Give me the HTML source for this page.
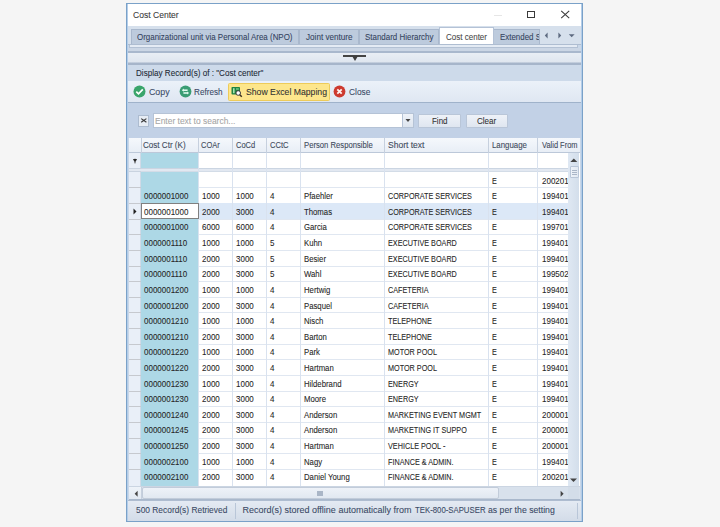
<!DOCTYPE html>
<html><head><meta charset="utf-8">
<style>
*{margin:0;padding:0;box-sizing:border-box}
html,body{width:720px;height:527px;overflow:hidden;background:#f5f5f5;font-family:"Liberation Sans",sans-serif;position:relative}
.a{position:absolute}
.t{position:absolute;white-space:pre;font-size:8px;line-height:10px;color:#333}
.g{position:absolute;white-space:pre;font-size:8px;line-height:10px;color:#2e2e2e}
.x{position:absolute;white-space:pre;line-height:1;-webkit-text-stroke:0.08px currentColor}
</style></head><body>

<div class="a" style="left:126px;top:3px;width:457px;height:519px;background:#7aa1c8"></div>
<div class="a" style="left:127px;top:4px;width:455px;height:517px;background:#b3cde9"></div>
<div class="a" style="left:128px;top:4px;width:453px;height:516px;background:#c9d7e8"></div>
<div class="a" style="left:128px;top:4px;width:453px;height:22px;background:#fff"></div>
<div class="x" style="left:133.30px;top:10.97px;font-size:9px;color:#3a3a3a;transform:scaleX(0.9515);transform-origin:0 0;">Cost Center</div>
<div class="a" style="left:494px;top:14.5px;width:8px;height:1px;background:#e6e6e6"></div>
<div class="a" style="left:527px;top:10.8px;width:8px;height:7.5px;border:1.2px solid #3a3a3a"></div>
<svg class="a" style="left:559px;top:9px" width="12" height="12" viewBox="0 0 12 12"><path d="M2.2 1.9L10.2 9.1M10.2 1.9L2.2 9.1" stroke="#3a3a3a" stroke-width="1.1"/></svg>
<div class="a" style="left:128px;top:26px;width:453px;height:19px;background:#d6e0ec"></div>
<div class="a" style="left:131px;top:29px;width:168px;height:16px;background:#bdcbdd;border:1px solid #a9b8cd;border-bottom:0"></div>
<div class="x" style="left:137.00px;top:33.27px;font-size:9px;color:#34435e;transform:scaleX(0.8831);transform-origin:0 0;">Organizational unit via Personal Area (NPO)</div>
<div class="a" style="left:299px;top:29px;width:60px;height:16px;background:#bdcbdd;border:1px solid #a9b8cd;border-bottom:0"></div>
<div class="x" style="left:305.60px;top:33.27px;font-size:9px;color:#34435e;transform:scaleX(0.9043);transform-origin:0 0;">Joint venture</div>
<div class="a" style="left:359px;top:29px;width:80px;height:16px;background:#bdcbdd;border:1px solid #a9b8cd;border-bottom:0"></div>
<div class="x" style="left:364.60px;top:33.27px;font-size:9px;color:#34435e;transform:scaleX(0.8833);transform-origin:0 0;">Standard Hierarchy</div>
<div class="a" style="left:439px;top:27px;width:55px;height:18px;background:#fff;border:1px solid #b4c2d6;border-bottom:0"></div>
<div class="x" style="left:445.70px;top:32.67px;font-size:9px;color:#4a4a4a;transform:scaleX(0.8907);transform-origin:0 0;">Cost center</div>
<div class="a" style="left:494px;top:29px;width:46px;height:16px;background:#bdcbdd;border:1px solid #a9b8cd;border-bottom:0;border-left:0;overflow:hidden"><div class="x" style="left:5.75px;top:3.3px;font-size:9px;color:#34435e;transform:scaleX(0.88);transform-origin:0 0">Extended Structure</div></div>
<svg class="a" style="left:540px;top:29px" width="41" height="14" viewBox="0 0 41 14"><path d="M7.6 3.6L4.8 6.5L7.6 9.4Z" fill="#5d6a80"/><path d="M18.4 3.6L21.2 6.5L18.4 9.4Z" fill="#5d6a80"/><path d="M28.8 5.3L34.6 5.3L31.7 8.2Z" fill="#5d6a80"/></svg>
<div class="a" style="left:128px;top:44px;width:453px;height:1px;background:#aebdd1"></div>
<div class="a" style="left:129px;top:45px;width:449px;height:3px;background:#e4ebf4;border:1px solid #b3c1d4;border-top:0"></div>
<div class="a" style="left:128px;top:48px;width:453px;height:3px;background:#cbd6e5"></div>
<div class="a" style="left:128px;top:51px;width:453px;height:14px;background:linear-gradient(#a9b8cd 0,#a9b8cd 1.5px,#e9eef5 2px,#dfe6ef 11px,#a6b5ca 12px,#a6b5ca 14px)"></div>
<div class="a" style="left:342.5px;top:55px;width:23.5px;height:2px;background:#444"></div>
<svg class="a" style="left:351px;top:56px" width="8" height="6" viewBox="0 0 8 6"><path d="M1 0L7 0L4 5Z" fill="#3e3e3e"/></svg>
<div class="a" style="left:128px;top:65px;width:453px;height:16px;background:#cddaea"></div>
<div class="x" style="left:135.60px;top:69.37px;font-size:9px;color:#222a36;transform:scaleX(0.9008);transform-origin:0 0;">Display Record(s) of : &quot;Cost center&quot;</div>
<div class="a" style="left:128px;top:81px;width:453px;height:21px;background:linear-gradient(#ebf1f9,#dfe7f2)"></div>
<div class="a" style="left:128px;top:101.5px;width:453px;height:1.5px;background:#9fb2ca"></div>
<svg class="a" style="left:133px;top:85px" width="13" height="13" viewBox="0 0 13 13"><circle cx="6.5" cy="6.5" r="6" fill="#3aa56b"/><path d="M3.3 6.6L5.5 8.8L9.8 4.3" stroke="#fff" stroke-width="1.7" fill="none"/></svg>
<div class="x" style="left:149.00px;top:87.57px;font-size:9px;color:#3b4a66;transform:scaleX(0.9802);transform-origin:0 0;">Copy</div>
<svg class="a" style="left:178.6px;top:85.1px" width="13" height="13" viewBox="0 0 13 13"><circle cx="6.5" cy="6.5" r="5.9" fill="#3a9d74"/><path d="M4.2 5.2L8.6 5.2" stroke="#e8fff4" stroke-width="1.5"/><path d="M2.8 5.2L4.8 3.6L4.8 6.8Z" fill="#e8fff4"/><path d="M4.4 8L8.6 8" stroke="#e8fff4" stroke-width="1.5"/><path d="M10.1 8L8.1 6.4L8.1 9.6Z" fill="#e8fff4"/></svg>
<div class="x" style="left:194.40px;top:87.57px;font-size:9px;color:#3b4a66;transform:scaleX(0.9043);transform-origin:0 0;">Refresh</div>
<div class="a" style="left:227.5px;top:82.5px;width:102px;height:18px;background:#fde68c;border:1px solid #edcb5a;border-radius:1.5px"></div>
<svg class="a" style="left:230px;top:85px" width="14" height="14" viewBox="0 0 14 14"><rect x="1.5" y="2" width="8.5" height="7.5" rx="0.8" fill="#1f8442"/><rect x="3" y="3.2" width="1.6" height="5" fill="#a6e3b0"/><rect x="6" y="3.2" width="2.8" height="1.6" fill="#6cc483"/><circle cx="8.2" cy="8" r="2.3" fill="#fff" stroke="#3a3a3a" stroke-width="1"/><path d="M9.8 9.7L11.8 11.8" stroke="#3a3020" stroke-width="1.5"/></svg>
<div class="x" style="left:245.80px;top:87.87px;font-size:9px;color:#333;transform:scaleX(0.9637);transform-origin:0 0;">Show Excel Mapping</div>
<svg class="a" style="left:333px;top:85px" width="13" height="13" viewBox="0 0 13 13"><circle cx="6.5" cy="6.5" r="5.9" fill="#cd3a2f"/><path d="M4.3 4.3L8.7 8.7M8.7 4.3L4.3 8.7" stroke="#fff2f0" stroke-width="1.8"/></svg>
<div class="x" style="left:349.10px;top:87.57px;font-size:9px;color:#3b4a66;transform:scaleX(0.9298);transform-origin:0 0;">Close</div>
<div class="a" style="left:128px;top:103px;width:453px;height:35px;background:#c2d1e6"></div>
<div class="a" style="left:138px;top:115px;width:11px;height:11.5px;background:#e6ecf4;border:1px solid #adbcd0"></div>
<svg class="a" style="left:140px;top:117px" width="8" height="8" viewBox="0 0 8 8"><path d="M1.2 1.6L6.4 5.2M6.4 1.6L1.2 5.2" stroke="#3a3a3a" stroke-width="1.15"/></svg>
<div class="a" style="left:153px;top:113px;width:261px;height:15px;background:#fff;border:1px solid #b5c3d6"></div>
<div class="x" style="left:155.20px;top:116.67px;font-size:9px;color:#a6a6a6;transform:scaleX(0.9398);transform-origin:0 0;">Enter text to search...</div>
<div class="a" style="left:402px;top:114px;width:11px;height:13px;background:linear-gradient(#eef2f8,#dde5ef);border-left:1px solid #b5c3d6"></div>
<svg class="a" style="left:404px;top:118px" width="8" height="5" viewBox="0 0 8 5"><path d="M1.5 1L6.5 1L4 4Z" fill="#444"/></svg>
<div class="a" style="left:418px;top:113.5px;width:43px;height:14.5px;background:linear-gradient(#eef2f8,#dfe6f0);border:1px solid #b9c6d8;border-radius:1px"></div>
<div class="x" style="left:431.50px;top:116.67px;font-size:9px;color:#333;transform:scaleX(0.8849);transform-origin:0 0;">Find</div>
<div class="a" style="left:465.5px;top:113.5px;width:42.5px;height:14.5px;background:linear-gradient(#eef2f8,#dfe6f0);border:1px solid #b9c6d8;border-radius:1px"></div>
<div class="x" style="left:476.70px;top:116.67px;font-size:9px;color:#333;transform:scaleX(0.8970);transform-origin:0 0;">Clear</div>
<div class="a" style="left:129px;top:138px;width:450.5px;height:362px;background:#fff"></div>
<div class="a" style="left:129px;top:138px;width:450.5px;height:14.5px;background:linear-gradient(#f5f8fc,#e8eef6);border-bottom:1px solid #bcc8d9"></div>
<div class="a" style="left:141px;top:138px;width:1px;height:14.5px;background:#c6d0de"></div>
<div class="x" style="left:143.40px;top:141.27px;font-size:9px;color:#414b5c;transform:scaleX(0.8965);transform-origin:0 0;-webkit-text-stroke:0.1px currentColor;">Cost Ctr (K)</div>
<div class="a" style="left:198px;top:138px;width:1px;height:14.5px;background:#c6d0de"></div>
<div class="x" style="left:201.30px;top:141.27px;font-size:9px;color:#414b5c;transform:scaleX(0.8311);transform-origin:0 0;-webkit-text-stroke:0.1px currentColor;">COAr</div>
<div class="a" style="left:232px;top:138px;width:1px;height:14.5px;background:#c6d0de"></div>
<div class="x" style="left:235.80px;top:141.27px;font-size:9px;color:#414b5c;transform:scaleX(0.8342);transform-origin:0 0;-webkit-text-stroke:0.1px currentColor;">CoCd</div>
<div class="a" style="left:266px;top:138px;width:1px;height:14.5px;background:#c6d0de"></div>
<div class="x" style="left:269.70px;top:141.27px;font-size:9px;color:#414b5c;transform:scaleX(0.8455);transform-origin:0 0;-webkit-text-stroke:0.1px currentColor;">CCtC</div>
<div class="a" style="left:300px;top:138px;width:1px;height:14.5px;background:#c6d0de"></div>
<div class="x" style="left:303.60px;top:141.27px;font-size:9px;color:#414b5c;transform:scaleX(0.8540);transform-origin:0 0;-webkit-text-stroke:0.1px currentColor;">Person Responsible</div>
<div class="a" style="left:384px;top:138px;width:1px;height:14.5px;background:#c6d0de"></div>
<div class="x" style="left:388.00px;top:141.27px;font-size:9px;color:#414b5c;transform:scaleX(0.9473);transform-origin:0 0;-webkit-text-stroke:0.1px currentColor;">Short text</div>
<div class="a" style="left:488px;top:138px;width:1px;height:14.5px;background:#c6d0de"></div>
<div class="x" style="left:492.00px;top:141.27px;font-size:9px;color:#414b5c;transform:scaleX(0.8740);transform-origin:0 0;-webkit-text-stroke:0.1px currentColor;">Language</div>
<div class="a" style="left:537px;top:138px;width:1px;height:14.5px;background:#c6d0de"></div>
<div class="x" style="left:542.30px;top:141.27px;font-size:9px;color:#414b5c;transform:scaleX(0.8286);transform-origin:0 0;-webkit-text-stroke:0.1px currentColor;">Valid From</div>
<div class="a" style="left:141px;top:152.5px;width:57px;height:15.5px;background:#add8e6"></div>
<div class="a" style="left:129px;top:168px;width:438.79999999999995px;height:4.2px;background:#e2e8f1;border-top:1px solid #cbd5e2;border-bottom:1px solid #d3dce7"></div>
<div class="a" style="left:141px;top:172.20px;width:57px;height:313.80px;background:#add8e6"></div>
<div class="a" style="left:198px;top:187.34px;width:369.79999999999995px;height:1px;background:#e0e7f1"></div>
<div class="a" style="left:198px;top:202.98px;width:369.79999999999995px;height:1px;background:#e0e7f1"></div>
<div class="a" style="left:141px;top:203.48px;width:426.79999999999995px;height:15.64px;background:#dce8f7"></div>
<div class="a" style="left:198px;top:218.62px;width:369.79999999999995px;height:1px;background:#e0e7f1"></div>
<div class="a" style="left:198px;top:234.26px;width:369.79999999999995px;height:1px;background:#e0e7f1"></div>
<div class="a" style="left:198px;top:249.90px;width:369.79999999999995px;height:1px;background:#e0e7f1"></div>
<div class="a" style="left:198px;top:265.54px;width:369.79999999999995px;height:1px;background:#e0e7f1"></div>
<div class="a" style="left:198px;top:281.18px;width:369.79999999999995px;height:1px;background:#e0e7f1"></div>
<div class="a" style="left:198px;top:296.82px;width:369.79999999999995px;height:1px;background:#e0e7f1"></div>
<div class="a" style="left:198px;top:312.46px;width:369.79999999999995px;height:1px;background:#e0e7f1"></div>
<div class="a" style="left:198px;top:328.10px;width:369.79999999999995px;height:1px;background:#e0e7f1"></div>
<div class="a" style="left:198px;top:343.74px;width:369.79999999999995px;height:1px;background:#e0e7f1"></div>
<div class="a" style="left:198px;top:359.38px;width:369.79999999999995px;height:1px;background:#e0e7f1"></div>
<div class="a" style="left:198px;top:375.02px;width:369.79999999999995px;height:1px;background:#e0e7f1"></div>
<div class="a" style="left:198px;top:390.66px;width:369.79999999999995px;height:1px;background:#e0e7f1"></div>
<div class="a" style="left:198px;top:406.30px;width:369.79999999999995px;height:1px;background:#e0e7f1"></div>
<div class="a" style="left:198px;top:421.94px;width:369.79999999999995px;height:1px;background:#e0e7f1"></div>
<div class="a" style="left:198px;top:437.58px;width:369.79999999999995px;height:1px;background:#e0e7f1"></div>
<div class="a" style="left:198px;top:453.22px;width:369.79999999999995px;height:1px;background:#e0e7f1"></div>
<div class="a" style="left:198px;top:468.86px;width:369.79999999999995px;height:1px;background:#e0e7f1"></div>
<div class="a" style="left:198px;top:152.5px;width:1px;height:333.5px;background:#d9e2ef"></div>
<div class="a" style="left:232px;top:152.5px;width:1px;height:333.5px;background:#d9e2ef"></div>
<div class="a" style="left:266px;top:152.5px;width:1px;height:333.5px;background:#d9e2ef"></div>
<div class="a" style="left:300px;top:152.5px;width:1px;height:333.5px;background:#d9e2ef"></div>
<div class="a" style="left:384px;top:152.5px;width:1px;height:333.5px;background:#d9e2ef"></div>
<div class="a" style="left:488px;top:152.5px;width:1px;height:333.5px;background:#d9e2ef"></div>
<div class="a" style="left:537px;top:152.5px;width:1px;height:333.5px;background:#d9e2ef"></div>
<div class="x" style="left:492.00px;top:176.57px;font-size:9px;color:#262626;transform:scaleX(0.8050);transform-origin:0 0;">E</div>
<div class="x" style="left:542.00px;top:176.57px;font-size:9px;color:#262626;transform:scaleX(0.8870);transform-origin:0 0;">20020101</div>
<div class="x" style="left:144.00px;top:192.19px;font-size:9px;color:#262626;transform:scaleX(0.8870);transform-origin:0 0;">0000001000</div>
<div class="x" style="left:202.00px;top:192.19px;font-size:9px;color:#262626;transform:scaleX(0.8870);transform-origin:0 0;">1000</div>
<div class="x" style="left:236.00px;top:192.19px;font-size:9px;color:#262626;transform:scaleX(0.8870);transform-origin:0 0;">1000</div>
<div class="x" style="left:270.00px;top:192.19px;font-size:9px;color:#262626;transform:scaleX(0.8870);transform-origin:0 0;">4</div>
<div class="x" style="left:304.00px;top:192.19px;font-size:9px;color:#262626;transform:scaleX(0.8620);transform-origin:0 0;">Pfaehler</div>
<div class="x" style="left:388.00px;top:192.19px;font-size:9px;color:#262626;transform:scaleX(0.8050);transform-origin:0 0;">CORPORATE SERVICES</div>
<div class="x" style="left:492.00px;top:192.19px;font-size:9px;color:#262626;transform:scaleX(0.8050);transform-origin:0 0;">E</div>
<div class="x" style="left:542.00px;top:192.19px;font-size:9px;color:#262626;transform:scaleX(0.8870);transform-origin:0 0;">19940101</div>
<div class="x" style="left:202.00px;top:207.81px;font-size:9px;color:#262626;transform:scaleX(0.8870);transform-origin:0 0;">2000</div>
<div class="x" style="left:236.00px;top:207.81px;font-size:9px;color:#262626;transform:scaleX(0.8870);transform-origin:0 0;">3000</div>
<div class="x" style="left:270.00px;top:207.81px;font-size:9px;color:#262626;transform:scaleX(0.8870);transform-origin:0 0;">4</div>
<div class="x" style="left:304.00px;top:207.81px;font-size:9px;color:#262626;transform:scaleX(0.8620);transform-origin:0 0;">Thomas</div>
<div class="x" style="left:388.00px;top:207.81px;font-size:9px;color:#262626;transform:scaleX(0.8050);transform-origin:0 0;">CORPORATE SERVICES</div>
<div class="x" style="left:492.00px;top:207.81px;font-size:9px;color:#262626;transform:scaleX(0.8050);transform-origin:0 0;">E</div>
<div class="x" style="left:542.00px;top:207.81px;font-size:9px;color:#262626;transform:scaleX(0.8870);transform-origin:0 0;">19940101</div>
<div class="x" style="left:144.00px;top:223.43px;font-size:9px;color:#262626;transform:scaleX(0.8870);transform-origin:0 0;">0000001000</div>
<div class="x" style="left:202.00px;top:223.43px;font-size:9px;color:#262626;transform:scaleX(0.8870);transform-origin:0 0;">6000</div>
<div class="x" style="left:236.00px;top:223.43px;font-size:9px;color:#262626;transform:scaleX(0.8870);transform-origin:0 0;">6000</div>
<div class="x" style="left:270.00px;top:223.43px;font-size:9px;color:#262626;transform:scaleX(0.8870);transform-origin:0 0;">4</div>
<div class="x" style="left:304.00px;top:223.43px;font-size:9px;color:#262626;transform:scaleX(0.8620);transform-origin:0 0;">Garcia</div>
<div class="x" style="left:388.00px;top:223.43px;font-size:9px;color:#262626;transform:scaleX(0.8050);transform-origin:0 0;">CORPORATE SERVICES</div>
<div class="x" style="left:492.00px;top:223.43px;font-size:9px;color:#262626;transform:scaleX(0.8050);transform-origin:0 0;">E</div>
<div class="x" style="left:542.00px;top:223.43px;font-size:9px;color:#262626;transform:scaleX(0.8870);transform-origin:0 0;">19970101</div>
<div class="x" style="left:144.00px;top:239.05px;font-size:9px;color:#262626;transform:scaleX(0.8870);transform-origin:0 0;">0000001110</div>
<div class="x" style="left:202.00px;top:239.05px;font-size:9px;color:#262626;transform:scaleX(0.8870);transform-origin:0 0;">1000</div>
<div class="x" style="left:236.00px;top:239.05px;font-size:9px;color:#262626;transform:scaleX(0.8870);transform-origin:0 0;">1000</div>
<div class="x" style="left:270.00px;top:239.05px;font-size:9px;color:#262626;transform:scaleX(0.8870);transform-origin:0 0;">5</div>
<div class="x" style="left:304.00px;top:239.05px;font-size:9px;color:#262626;transform:scaleX(0.8620);transform-origin:0 0;">Kuhn</div>
<div class="x" style="left:388.00px;top:239.05px;font-size:9px;color:#262626;transform:scaleX(0.8050);transform-origin:0 0;">EXECUTIVE BOARD</div>
<div class="x" style="left:492.00px;top:239.05px;font-size:9px;color:#262626;transform:scaleX(0.8050);transform-origin:0 0;">E</div>
<div class="x" style="left:542.00px;top:239.05px;font-size:9px;color:#262626;transform:scaleX(0.8870);transform-origin:0 0;">19940101</div>
<div class="x" style="left:144.00px;top:254.67px;font-size:9px;color:#262626;transform:scaleX(0.8870);transform-origin:0 0;">0000001110</div>
<div class="x" style="left:202.00px;top:254.67px;font-size:9px;color:#262626;transform:scaleX(0.8870);transform-origin:0 0;">2000</div>
<div class="x" style="left:236.00px;top:254.67px;font-size:9px;color:#262626;transform:scaleX(0.8870);transform-origin:0 0;">3000</div>
<div class="x" style="left:270.00px;top:254.67px;font-size:9px;color:#262626;transform:scaleX(0.8870);transform-origin:0 0;">5</div>
<div class="x" style="left:304.00px;top:254.67px;font-size:9px;color:#262626;transform:scaleX(0.8620);transform-origin:0 0;">Besier</div>
<div class="x" style="left:388.00px;top:254.67px;font-size:9px;color:#262626;transform:scaleX(0.8050);transform-origin:0 0;">EXECUTIVE BOARD</div>
<div class="x" style="left:492.00px;top:254.67px;font-size:9px;color:#262626;transform:scaleX(0.8050);transform-origin:0 0;">E</div>
<div class="x" style="left:542.00px;top:254.67px;font-size:9px;color:#262626;transform:scaleX(0.8870);transform-origin:0 0;">19940101</div>
<div class="x" style="left:144.00px;top:270.29px;font-size:9px;color:#262626;transform:scaleX(0.8870);transform-origin:0 0;">0000001110</div>
<div class="x" style="left:202.00px;top:270.29px;font-size:9px;color:#262626;transform:scaleX(0.8870);transform-origin:0 0;">2000</div>
<div class="x" style="left:236.00px;top:270.29px;font-size:9px;color:#262626;transform:scaleX(0.8870);transform-origin:0 0;">3000</div>
<div class="x" style="left:270.00px;top:270.29px;font-size:9px;color:#262626;transform:scaleX(0.8870);transform-origin:0 0;">5</div>
<div class="x" style="left:304.00px;top:270.29px;font-size:9px;color:#262626;transform:scaleX(0.8620);transform-origin:0 0;">Wahl</div>
<div class="x" style="left:388.00px;top:270.29px;font-size:9px;color:#262626;transform:scaleX(0.8050);transform-origin:0 0;">EXECUTIVE BOARD</div>
<div class="x" style="left:492.00px;top:270.29px;font-size:9px;color:#262626;transform:scaleX(0.8050);transform-origin:0 0;">E</div>
<div class="x" style="left:542.00px;top:270.29px;font-size:9px;color:#262626;transform:scaleX(0.8870);transform-origin:0 0;">19950201</div>
<div class="x" style="left:144.00px;top:285.91px;font-size:9px;color:#262626;transform:scaleX(0.8870);transform-origin:0 0;">0000001200</div>
<div class="x" style="left:202.00px;top:285.91px;font-size:9px;color:#262626;transform:scaleX(0.8870);transform-origin:0 0;">1000</div>
<div class="x" style="left:236.00px;top:285.91px;font-size:9px;color:#262626;transform:scaleX(0.8870);transform-origin:0 0;">1000</div>
<div class="x" style="left:270.00px;top:285.91px;font-size:9px;color:#262626;transform:scaleX(0.8870);transform-origin:0 0;">4</div>
<div class="x" style="left:304.00px;top:285.91px;font-size:9px;color:#262626;transform:scaleX(0.8620);transform-origin:0 0;">Hertwig</div>
<div class="x" style="left:388.00px;top:285.91px;font-size:9px;color:#262626;transform:scaleX(0.8050);transform-origin:0 0;">CAFETERIA</div>
<div class="x" style="left:492.00px;top:285.91px;font-size:9px;color:#262626;transform:scaleX(0.8050);transform-origin:0 0;">E</div>
<div class="x" style="left:542.00px;top:285.91px;font-size:9px;color:#262626;transform:scaleX(0.8870);transform-origin:0 0;">19940101</div>
<div class="x" style="left:144.00px;top:301.53px;font-size:9px;color:#262626;transform:scaleX(0.8870);transform-origin:0 0;">0000001200</div>
<div class="x" style="left:202.00px;top:301.53px;font-size:9px;color:#262626;transform:scaleX(0.8870);transform-origin:0 0;">2000</div>
<div class="x" style="left:236.00px;top:301.53px;font-size:9px;color:#262626;transform:scaleX(0.8870);transform-origin:0 0;">3000</div>
<div class="x" style="left:270.00px;top:301.53px;font-size:9px;color:#262626;transform:scaleX(0.8870);transform-origin:0 0;">4</div>
<div class="x" style="left:304.00px;top:301.53px;font-size:9px;color:#262626;transform:scaleX(0.8620);transform-origin:0 0;">Pasquel</div>
<div class="x" style="left:388.00px;top:301.53px;font-size:9px;color:#262626;transform:scaleX(0.8050);transform-origin:0 0;">CAFETERIA</div>
<div class="x" style="left:492.00px;top:301.53px;font-size:9px;color:#262626;transform:scaleX(0.8050);transform-origin:0 0;">E</div>
<div class="x" style="left:542.00px;top:301.53px;font-size:9px;color:#262626;transform:scaleX(0.8870);transform-origin:0 0;">19940101</div>
<div class="x" style="left:144.00px;top:317.15px;font-size:9px;color:#262626;transform:scaleX(0.8870);transform-origin:0 0;">0000001210</div>
<div class="x" style="left:202.00px;top:317.15px;font-size:9px;color:#262626;transform:scaleX(0.8870);transform-origin:0 0;">1000</div>
<div class="x" style="left:236.00px;top:317.15px;font-size:9px;color:#262626;transform:scaleX(0.8870);transform-origin:0 0;">1000</div>
<div class="x" style="left:270.00px;top:317.15px;font-size:9px;color:#262626;transform:scaleX(0.8870);transform-origin:0 0;">4</div>
<div class="x" style="left:304.00px;top:317.15px;font-size:9px;color:#262626;transform:scaleX(0.8620);transform-origin:0 0;">Nisch</div>
<div class="x" style="left:388.00px;top:317.15px;font-size:9px;color:#262626;transform:scaleX(0.8050);transform-origin:0 0;">TELEPHONE</div>
<div class="x" style="left:492.00px;top:317.15px;font-size:9px;color:#262626;transform:scaleX(0.8050);transform-origin:0 0;">E</div>
<div class="x" style="left:542.00px;top:317.15px;font-size:9px;color:#262626;transform:scaleX(0.8870);transform-origin:0 0;">19940101</div>
<div class="x" style="left:144.00px;top:332.77px;font-size:9px;color:#262626;transform:scaleX(0.8870);transform-origin:0 0;">0000001210</div>
<div class="x" style="left:202.00px;top:332.77px;font-size:9px;color:#262626;transform:scaleX(0.8870);transform-origin:0 0;">2000</div>
<div class="x" style="left:236.00px;top:332.77px;font-size:9px;color:#262626;transform:scaleX(0.8870);transform-origin:0 0;">3000</div>
<div class="x" style="left:270.00px;top:332.77px;font-size:9px;color:#262626;transform:scaleX(0.8870);transform-origin:0 0;">4</div>
<div class="x" style="left:304.00px;top:332.77px;font-size:9px;color:#262626;transform:scaleX(0.8620);transform-origin:0 0;">Barton</div>
<div class="x" style="left:388.00px;top:332.77px;font-size:9px;color:#262626;transform:scaleX(0.8050);transform-origin:0 0;">TELEPHONE</div>
<div class="x" style="left:492.00px;top:332.77px;font-size:9px;color:#262626;transform:scaleX(0.8050);transform-origin:0 0;">E</div>
<div class="x" style="left:542.00px;top:332.77px;font-size:9px;color:#262626;transform:scaleX(0.8870);transform-origin:0 0;">19940101</div>
<div class="x" style="left:144.00px;top:348.39px;font-size:9px;color:#262626;transform:scaleX(0.8870);transform-origin:0 0;">0000001220</div>
<div class="x" style="left:202.00px;top:348.39px;font-size:9px;color:#262626;transform:scaleX(0.8870);transform-origin:0 0;">1000</div>
<div class="x" style="left:236.00px;top:348.39px;font-size:9px;color:#262626;transform:scaleX(0.8870);transform-origin:0 0;">1000</div>
<div class="x" style="left:270.00px;top:348.39px;font-size:9px;color:#262626;transform:scaleX(0.8870);transform-origin:0 0;">4</div>
<div class="x" style="left:304.00px;top:348.39px;font-size:9px;color:#262626;transform:scaleX(0.8620);transform-origin:0 0;">Park</div>
<div class="x" style="left:388.00px;top:348.39px;font-size:9px;color:#262626;transform:scaleX(0.8050);transform-origin:0 0;">MOTOR POOL</div>
<div class="x" style="left:492.00px;top:348.39px;font-size:9px;color:#262626;transform:scaleX(0.8050);transform-origin:0 0;">E</div>
<div class="x" style="left:542.00px;top:348.39px;font-size:9px;color:#262626;transform:scaleX(0.8870);transform-origin:0 0;">19940101</div>
<div class="x" style="left:144.00px;top:364.01px;font-size:9px;color:#262626;transform:scaleX(0.8870);transform-origin:0 0;">0000001220</div>
<div class="x" style="left:202.00px;top:364.01px;font-size:9px;color:#262626;transform:scaleX(0.8870);transform-origin:0 0;">2000</div>
<div class="x" style="left:236.00px;top:364.01px;font-size:9px;color:#262626;transform:scaleX(0.8870);transform-origin:0 0;">3000</div>
<div class="x" style="left:270.00px;top:364.01px;font-size:9px;color:#262626;transform:scaleX(0.8870);transform-origin:0 0;">4</div>
<div class="x" style="left:304.00px;top:364.01px;font-size:9px;color:#262626;transform:scaleX(0.8620);transform-origin:0 0;">Hartman</div>
<div class="x" style="left:388.00px;top:364.01px;font-size:9px;color:#262626;transform:scaleX(0.8050);transform-origin:0 0;">MOTOR POOL</div>
<div class="x" style="left:492.00px;top:364.01px;font-size:9px;color:#262626;transform:scaleX(0.8050);transform-origin:0 0;">E</div>
<div class="x" style="left:542.00px;top:364.01px;font-size:9px;color:#262626;transform:scaleX(0.8870);transform-origin:0 0;">19940101</div>
<div class="x" style="left:144.00px;top:379.63px;font-size:9px;color:#262626;transform:scaleX(0.8870);transform-origin:0 0;">0000001230</div>
<div class="x" style="left:202.00px;top:379.63px;font-size:9px;color:#262626;transform:scaleX(0.8870);transform-origin:0 0;">1000</div>
<div class="x" style="left:236.00px;top:379.63px;font-size:9px;color:#262626;transform:scaleX(0.8870);transform-origin:0 0;">1000</div>
<div class="x" style="left:270.00px;top:379.63px;font-size:9px;color:#262626;transform:scaleX(0.8870);transform-origin:0 0;">4</div>
<div class="x" style="left:304.00px;top:379.63px;font-size:9px;color:#262626;transform:scaleX(0.8620);transform-origin:0 0;">Hildebrand</div>
<div class="x" style="left:388.00px;top:379.63px;font-size:9px;color:#262626;transform:scaleX(0.8050);transform-origin:0 0;">ENERGY</div>
<div class="x" style="left:492.00px;top:379.63px;font-size:9px;color:#262626;transform:scaleX(0.8050);transform-origin:0 0;">E</div>
<div class="x" style="left:542.00px;top:379.63px;font-size:9px;color:#262626;transform:scaleX(0.8870);transform-origin:0 0;">19940101</div>
<div class="x" style="left:144.00px;top:395.25px;font-size:9px;color:#262626;transform:scaleX(0.8870);transform-origin:0 0;">0000001230</div>
<div class="x" style="left:202.00px;top:395.25px;font-size:9px;color:#262626;transform:scaleX(0.8870);transform-origin:0 0;">2000</div>
<div class="x" style="left:236.00px;top:395.25px;font-size:9px;color:#262626;transform:scaleX(0.8870);transform-origin:0 0;">3000</div>
<div class="x" style="left:270.00px;top:395.25px;font-size:9px;color:#262626;transform:scaleX(0.8870);transform-origin:0 0;">4</div>
<div class="x" style="left:304.00px;top:395.25px;font-size:9px;color:#262626;transform:scaleX(0.8620);transform-origin:0 0;">Moore</div>
<div class="x" style="left:388.00px;top:395.25px;font-size:9px;color:#262626;transform:scaleX(0.8050);transform-origin:0 0;">ENERGY</div>
<div class="x" style="left:492.00px;top:395.25px;font-size:9px;color:#262626;transform:scaleX(0.8050);transform-origin:0 0;">E</div>
<div class="x" style="left:542.00px;top:395.25px;font-size:9px;color:#262626;transform:scaleX(0.8870);transform-origin:0 0;">19940101</div>
<div class="x" style="left:144.00px;top:410.87px;font-size:9px;color:#262626;transform:scaleX(0.8870);transform-origin:0 0;">0000001240</div>
<div class="x" style="left:202.00px;top:410.87px;font-size:9px;color:#262626;transform:scaleX(0.8870);transform-origin:0 0;">2000</div>
<div class="x" style="left:236.00px;top:410.87px;font-size:9px;color:#262626;transform:scaleX(0.8870);transform-origin:0 0;">3000</div>
<div class="x" style="left:270.00px;top:410.87px;font-size:9px;color:#262626;transform:scaleX(0.8870);transform-origin:0 0;">4</div>
<div class="x" style="left:304.00px;top:410.87px;font-size:9px;color:#262626;transform:scaleX(0.8620);transform-origin:0 0;">Anderson</div>
<div class="x" style="left:388.00px;top:410.87px;font-size:9px;color:#262626;transform:scaleX(0.8050);transform-origin:0 0;">MARKETING EVENT MGMT</div>
<div class="x" style="left:492.00px;top:410.87px;font-size:9px;color:#262626;transform:scaleX(0.8050);transform-origin:0 0;">E</div>
<div class="x" style="left:542.00px;top:410.87px;font-size:9px;color:#262626;transform:scaleX(0.8870);transform-origin:0 0;">20000101</div>
<div class="x" style="left:144.00px;top:426.49px;font-size:9px;color:#262626;transform:scaleX(0.8870);transform-origin:0 0;">0000001245</div>
<div class="x" style="left:202.00px;top:426.49px;font-size:9px;color:#262626;transform:scaleX(0.8870);transform-origin:0 0;">2000</div>
<div class="x" style="left:236.00px;top:426.49px;font-size:9px;color:#262626;transform:scaleX(0.8870);transform-origin:0 0;">3000</div>
<div class="x" style="left:270.00px;top:426.49px;font-size:9px;color:#262626;transform:scaleX(0.8870);transform-origin:0 0;">4</div>
<div class="x" style="left:304.00px;top:426.49px;font-size:9px;color:#262626;transform:scaleX(0.8620);transform-origin:0 0;">Anderson</div>
<div class="x" style="left:388.00px;top:426.49px;font-size:9px;color:#262626;transform:scaleX(0.8050);transform-origin:0 0;">MARKETING IT SUPPO</div>
<div class="x" style="left:492.00px;top:426.49px;font-size:9px;color:#262626;transform:scaleX(0.8050);transform-origin:0 0;">E</div>
<div class="x" style="left:542.00px;top:426.49px;font-size:9px;color:#262626;transform:scaleX(0.8870);transform-origin:0 0;">20000101</div>
<div class="x" style="left:144.00px;top:442.11px;font-size:9px;color:#262626;transform:scaleX(0.8870);transform-origin:0 0;">0000001250</div>
<div class="x" style="left:202.00px;top:442.11px;font-size:9px;color:#262626;transform:scaleX(0.8870);transform-origin:0 0;">2000</div>
<div class="x" style="left:236.00px;top:442.11px;font-size:9px;color:#262626;transform:scaleX(0.8870);transform-origin:0 0;">3000</div>
<div class="x" style="left:270.00px;top:442.11px;font-size:9px;color:#262626;transform:scaleX(0.8870);transform-origin:0 0;">4</div>
<div class="x" style="left:304.00px;top:442.11px;font-size:9px;color:#262626;transform:scaleX(0.8620);transform-origin:0 0;">Hartman</div>
<div class="x" style="left:388.00px;top:442.11px;font-size:9px;color:#262626;transform:scaleX(0.8050);transform-origin:0 0;">VEHICLE POOL -</div>
<div class="x" style="left:492.00px;top:442.11px;font-size:9px;color:#262626;transform:scaleX(0.8050);transform-origin:0 0;">E</div>
<div class="x" style="left:542.00px;top:442.11px;font-size:9px;color:#262626;transform:scaleX(0.8870);transform-origin:0 0;">20000101</div>
<div class="x" style="left:144.00px;top:457.73px;font-size:9px;color:#262626;transform:scaleX(0.8870);transform-origin:0 0;">0000002100</div>
<div class="x" style="left:202.00px;top:457.73px;font-size:9px;color:#262626;transform:scaleX(0.8870);transform-origin:0 0;">1000</div>
<div class="x" style="left:236.00px;top:457.73px;font-size:9px;color:#262626;transform:scaleX(0.8870);transform-origin:0 0;">1000</div>
<div class="x" style="left:270.00px;top:457.73px;font-size:9px;color:#262626;transform:scaleX(0.8870);transform-origin:0 0;">4</div>
<div class="x" style="left:304.00px;top:457.73px;font-size:9px;color:#262626;transform:scaleX(0.8620);transform-origin:0 0;">Nagy</div>
<div class="x" style="left:388.00px;top:457.73px;font-size:9px;color:#262626;transform:scaleX(0.8050);transform-origin:0 0;">FINANCE &amp; ADMIN.</div>
<div class="x" style="left:492.00px;top:457.73px;font-size:9px;color:#262626;transform:scaleX(0.8050);transform-origin:0 0;">E</div>
<div class="x" style="left:542.00px;top:457.73px;font-size:9px;color:#262626;transform:scaleX(0.8870);transform-origin:0 0;">19940101</div>
<div class="x" style="left:144.00px;top:473.35px;font-size:9px;color:#262626;transform:scaleX(0.8870);transform-origin:0 0;">0000002100</div>
<div class="x" style="left:202.00px;top:473.35px;font-size:9px;color:#262626;transform:scaleX(0.8870);transform-origin:0 0;">2000</div>
<div class="x" style="left:236.00px;top:473.35px;font-size:9px;color:#262626;transform:scaleX(0.8870);transform-origin:0 0;">3000</div>
<div class="x" style="left:270.00px;top:473.35px;font-size:9px;color:#262626;transform:scaleX(0.8870);transform-origin:0 0;">4</div>
<div class="x" style="left:304.00px;top:473.35px;font-size:9px;color:#262626;transform:scaleX(0.8620);transform-origin:0 0;">Daniel Young</div>
<div class="x" style="left:388.00px;top:473.35px;font-size:9px;color:#262626;transform:scaleX(0.8050);transform-origin:0 0;">FINANCE &amp; ADMIN.</div>
<div class="x" style="left:492.00px;top:473.35px;font-size:9px;color:#262626;transform:scaleX(0.8050);transform-origin:0 0;">E</div>
<div class="x" style="left:542.00px;top:473.35px;font-size:9px;color:#262626;transform:scaleX(0.8870);transform-origin:0 0;">20020101</div>
<div class="a" style="left:129px;top:152.5px;width:12px;height:333.5px;background:#e9eff8;border-right:1px solid #d0dae7"></div>
<div class="a" style="left:129px;top:187.34px;width:12px;height:1px;background:#c6c9cf"></div>
<div class="a" style="left:129px;top:202.98px;width:12px;height:1px;background:#c6c9cf"></div>
<div class="a" style="left:129px;top:218.62px;width:12px;height:1px;background:#c6c9cf"></div>
<div class="a" style="left:129px;top:234.26px;width:12px;height:1px;background:#c6c9cf"></div>
<div class="a" style="left:129px;top:249.90px;width:12px;height:1px;background:#c6c9cf"></div>
<div class="a" style="left:129px;top:265.54px;width:12px;height:1px;background:#c6c9cf"></div>
<div class="a" style="left:129px;top:281.18px;width:12px;height:1px;background:#c6c9cf"></div>
<div class="a" style="left:129px;top:296.82px;width:12px;height:1px;background:#c6c9cf"></div>
<div class="a" style="left:129px;top:312.46px;width:12px;height:1px;background:#c6c9cf"></div>
<div class="a" style="left:129px;top:328.10px;width:12px;height:1px;background:#c6c9cf"></div>
<div class="a" style="left:129px;top:343.74px;width:12px;height:1px;background:#c6c9cf"></div>
<div class="a" style="left:129px;top:359.38px;width:12px;height:1px;background:#c6c9cf"></div>
<div class="a" style="left:129px;top:375.02px;width:12px;height:1px;background:#c6c9cf"></div>
<div class="a" style="left:129px;top:390.66px;width:12px;height:1px;background:#c6c9cf"></div>
<div class="a" style="left:129px;top:406.30px;width:12px;height:1px;background:#c6c9cf"></div>
<div class="a" style="left:129px;top:421.94px;width:12px;height:1px;background:#c6c9cf"></div>
<div class="a" style="left:129px;top:437.58px;width:12px;height:1px;background:#c6c9cf"></div>
<div class="a" style="left:129px;top:453.22px;width:12px;height:1px;background:#c6c9cf"></div>
<div class="a" style="left:129px;top:468.86px;width:12px;height:1px;background:#c6c9cf"></div>
<div class="a" style="left:129px;top:168px;width:12px;height:4.2px;background:#e2e8f1;border-top:1px solid #c9d3e0;border-bottom:1px solid #c9d3e0"></div>
<svg class="a" style="left:132px;top:158px" width="6" height="7" viewBox="0 0 6 7"><path d="M0.9 1.2Q3 0.3 5.1 1.2L3.6 3.6L3.3 5.6L2.7 5.6L2.4 3.6Z" fill="#2a2a2a"/></svg>
<svg class="a" style="left:132px;top:207.98px" width="6" height="7" viewBox="0 0 6 7"><path d="M1.5 0.5L4.5 3.5L1.5 6.5Z" fill="#222"/></svg>
<div class="a" style="left:141px;top:203.48px;width:57.5px;height:15.64px;background:#fff;border:1px solid #808080"></div>
<div class="x" style="left:144.00px;top:207.81px;font-size:9px;color:#262626;transform:scaleX(0.8870);transform-origin:0 0;">0000001000</div>
<div class="a" style="left:567.8px;top:152.5px;width:11.700000000000045px;height:333.5px;background:linear-gradient(90deg,#dfe8f3,#d3deeb)"></div>
<svg class="a" style="left:568.3px;top:156px" width="11" height="10" viewBox="0 0 11 10"><path d="M2.3 6L9.3 6L5.8 2.6Z" fill="#444"/></svg>
<div class="a" style="left:569.5999999999999px;top:166.3px;width:9px;height:12px;background:linear-gradient(90deg,#eef3f9,#e2e9f2);border:1px solid #b9c6d8;border-radius:1px"></div>
<div class="a" style="left:572.0px;top:170.3px;width:4.5px;height:5px;background:repeating-linear-gradient(#aab6c7 0 1px,transparent 1px 2px)"></div>
<svg class="a" style="left:568.3px;top:475px" width="11" height="10" viewBox="0 0 11 10"><path d="M2 3.5L9 3.5L5.5 7Z" fill="#444"/></svg>
<div class="a" style="left:129px;top:486px;width:450.5px;height:14px;background:#d8e1ec;border-top:1px solid #cbd5e2;border-bottom:1px solid #a9b8cc"></div>
<div class="a" style="left:567.8px;top:487px;width:11.700000000000045px;height:12px;background:#d3dde9"></div>
<div class="a" style="left:142px;top:487px;width:356.5px;height:12px;background:linear-gradient(#eef2f8,#e1e8f1);border:1px solid #c2ccda;border-radius:2px"></div>
<div class="a" style="left:317px;top:490.5px;width:6px;height:5px;background:#aab6c7"></div>
<div class="a" style="left:129px;top:487px;width:13px;height:12px;background:linear-gradient(#eef3f9,#e2e9f2);border-right:1px solid #c6d0de"></div>
<svg class="a" style="left:132px;top:488.5px" width="8" height="10" viewBox="0 0 8 10"><path d="M5.6 1.8L2.6 4.8L5.6 7.8Z" fill="#444"/></svg>
<svg class="a" style="left:558px;top:488.5px" width="8" height="10" viewBox="0 0 8 10"><path d="M2.6 1.8L5.6 4.8L2.6 7.8Z" fill="#444"/></svg>
<div class="a" style="left:128px;top:500px;width:453px;height:21px;background:linear-gradient(#e4eaf3,#d3dce8);border-top:1px solid #aebcd0"></div>
<div class="x" style="left:135.70px;top:506.27px;font-size:9px;color:#3b4a66;transform:scaleX(0.9312);transform-origin:0 0;">500 Record(s) Retrieved</div>
<div class="a" style="left:235px;top:503px;width:1px;height:16px;background:#b9c6d8"></div>
<div class="x" style="left:242.50px;top:506.27px;font-size:9px;color:#3b4a66;">Record(s) stored offline automatically from</div>
<div class="x" style="left:415.10px;top:506.27px;font-size:9px;color:#3b4a66;transform:scaleX(0.8647);transform-origin:0 0;">TEK-800-SAPUSER</div>
<div class="x" style="left:487.60px;top:506.27px;font-size:9px;color:#3b4a66;transform:scaleX(0.9675);transform-origin:0 0;">as per the setting</div>
<div class="a" style="left:577px;top:503px;width:1px;height:16px;background:#b9c6d8"></div>
</body></html>
